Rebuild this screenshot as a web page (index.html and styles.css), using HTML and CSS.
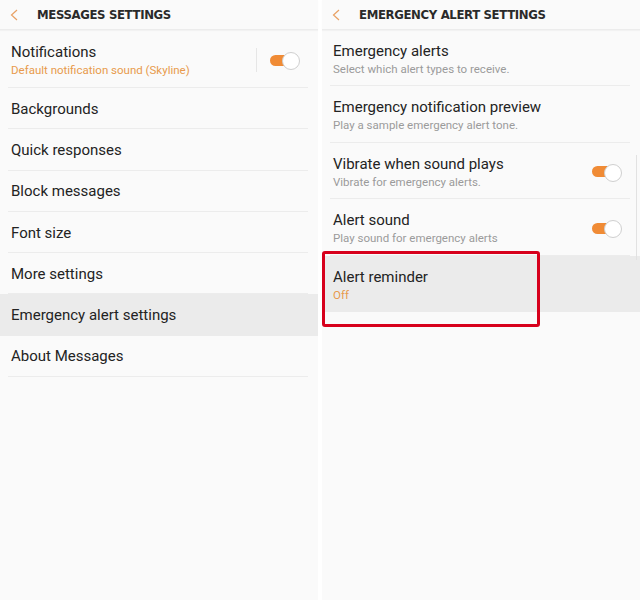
FILE: index.html
```html
<!DOCTYPE html>
<html lang="en">
<head>
    <meta charset="UTF-8">
    <meta name="viewport" content="width=device-width, initial-scale=1.0">
    <title>Messages settings</title>
    <link rel="stylesheet" href="styles.css">
</head>
<body>
    <div class="screens">

        <div class="screen">
            <div class="header">
                <svg class="back" viewBox="0 0 8 12" width="8" height="12"><path d="M7 1L1.5 6L7 11"/></svg>
                <h1>MESSAGES SETTINGS</h1>
            </div>
            <ul class="list">
                <li class="item item-tall">
                    <div class="text">
                        <div class="title">Notifications</div>
                        <div class="sub sub-accent">Default notification sound (Skyline)</div>
                    </div>
                    <span class="divider"></span>
                    <span class="switch on"></span>
                </li>
                <li class="item"><div class="title">Backgrounds</div></li>
                <li class="item"><div class="title">Quick responses</div></li>
                <li class="item"><div class="title">Block messages</div></li>
                <li class="item"><div class="title">Font size</div></li>
                <li class="item"><div class="title">More settings</div></li>
                <li class="item pressed"><div class="title">Emergency alert settings</div></li>
                <li class="item"><div class="title">About Messages</div></li>
            </ul>
        </div>

        <div class="screen">
            <div class="header">
                <svg class="back" viewBox="0 0 8 12" width="8" height="12"><path d="M7 1L1.5 6L7 11"/></svg>
                <h1>EMERGENCY ALERT SETTINGS</h1>
            </div>
            <ul class="list list-alerts">
                <li class="item item-tall">
                    <div class="text">
                        <div class="title">Emergency alerts</div>
                        <div class="sub">Select which alert types to receive.</div>
                    </div>
                </li>
                <li class="item item-tall">
                    <div class="text">
                        <div class="title">Emergency notification preview</div>
                        <div class="sub">Play a sample emergency alert tone.</div>
                    </div>
                </li>
                <li class="item item-tall">
                    <div class="text">
                        <div class="title">Vibrate when sound plays</div>
                        <div class="sub">Vibrate for emergency alerts.</div>
                    </div>
                    <span class="switch on"></span>
                </li>
                <li class="item item-tall">
                    <div class="text">
                        <div class="title">Alert sound</div>
                        <div class="sub">Play sound for emergency alerts</div>
                    </div>
                    <span class="switch on"></span>
                </li>
                <li class="item item-tall pressed">
                    <div class="text">
                        <div class="title">Alert reminder</div>
                        <div class="sub sub-accent">Off</div>
                    </div>
                    <span class="callout"></span>
                </li>
            </ul>
            <span class="scroll-edge"></span>
        </div>

    </div>
</body>
</html>
```

FILE: styles.css
```css
:root {
    --bg: #fafafa;
    --gap: #ffffff;
    --text: #232323;
    --sub: #9b9b9b;
    --accent: #f08b35;
    --accent-text: #e89a4c;
    --line: #ececec;
    --pressed: #ebebeb;
    --callout: #d7001c;
}

* {
    box-sizing: border-box;
}
body {
    margin: 0;
    background-color: var(--gap);
    font-family: Roboto, "Noto Sans", sans-serif;
    color: var(--text);
}
.screens {
    display: flex;
    gap: 4px;
    height: 600px;
}
.screen {
    position: relative;
    flex: 1;
    background-color: var(--bg);
}
.header {
    display: flex;
    align-items: center;
    height: 30px;
    padding-left: 10px;
    border-bottom: 1px solid #ececec;
    box-shadow: 0 1px 1px rgba(0,0,0,0.03);
}
.back {
    fill: none;
    stroke: #e8a063;
    stroke-width: 1.2;
    margin-right: 19px;
}
h1 {
    margin: 0;
    font-family: "DejaVu Sans Condensed", "Liberation Sans Narrow", sans-serif;
    font-size: 13px;
    font-weight: bold;
    letter-spacing: -0.35px;
    color: #2a2a2a;
}
.list {
    list-style: none;
    margin: 0;
    padding: 0;
}
.item {
    position: relative;
    display: flex;
    align-items: center;
    height: 41.3px;
    padding: 0 8px 0 11px;
}
.item::after {
    content: "";
    position: absolute;
    left: 8px;
    right: 10px;
    bottom: 0;
    border-bottom: 1px solid var(--line);
}
.item-tall {
    height: 58px;
    padding-top: 2px;
}
.list-alerts .item {
    height: 56.5px;
    padding-left: 11px;
}
.list-alerts .item:first-child {
    height: 56px;
}
.pressed {
    background-color: var(--pressed);
}
.pressed::after {
    display: none;
}
.text {
    flex: 1;
    display: flex;
    flex-direction: column;
    gap: 2px;
}
.title {
    font-size: 15px;
    line-height: 18px;
}
.sub {
    font-size: 11.5px;
    line-height: 14px;
    color: var(--sub);
}
.sub-accent {
    color: var(--accent-text);
}
.divider {
    width: 1px;
    height: 24px;
    background-color: #e6e6e6;
    margin-right: 13px;
}
.switch {
    position: relative;
    width: 30px;
    height: 16px;
    margin-right: 10px;
}
.switch::before {
    content: "";
    position: absolute;
    left: 0;
    right: 2px;
    top: 2.5px;
    height: 11px;
    border-radius: 6px;
    background-color: var(--accent);
}
.switch::after {
    content: "";
    position: absolute;
    right: 0;
    top: 0;
    width: 16px;
    height: 16px;
    border-radius: 50%;
    background-color: #ffffff;
    border: 1px solid #cfcfcf;
}
.callout {
    position: absolute;
    left: 0;
    top: -5px;
    width: 218px;
    height: 76px;
    border: 3px solid var(--callout);
    border-radius: 3px;
}
.scroll-edge {
    position: absolute;
    right: 3px;
    top: 155px;
    width: 1px;
    height: 105px;
    background-color: #e2e2e2;
}
```
